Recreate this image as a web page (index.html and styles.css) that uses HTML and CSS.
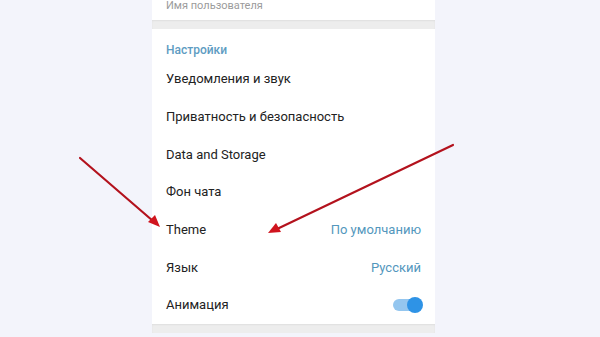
FILE: index.html
```html
<!DOCTYPE html>
<html lang="ru">
<head>
<meta charset="utf-8">
<link rel="stylesheet" href="styles.css">
</head>
<body>
<div class="panel">
  <div class="card card-top">
    <div class="username">Имя пользователя</div>
  </div>
  <div class="band"></div>
  <div class="card settings">
    <div class="header">Настройки</div>
    <div class="row"><span>Уведомления и звук</span></div>
    <div class="row"><span>Приватность и безопасность</span></div>
    <div class="row"><span>Data and Storage</span></div>
    <div class="row"><span>Фон чата</span></div>
    <div class="row"><span>Theme</span><span class="value">По умолчанию</span></div>
    <div class="row"><span>Язык</span><span class="value">Русский</span></div>
    <div class="row"><span>Анимация</span><span class="toggle"><span class="knob"></span></span></div>
  </div>
  <div class="band"></div>
  <div class="card card-bottom"></div>
</div>
<svg class="arrows" width="600" height="337" viewBox="0 0 600 337">
  <line x1="80" y1="158" x2="153" y2="221" stroke="#b3121d" stroke-width="2.2" stroke-linecap="round"/>
  <polygon points="160,227 148,222 155,215" fill="#d0141e"/>
  <line x1="453" y1="145" x2="277" y2="229" stroke="#b3121d" stroke-width="2.2" stroke-linecap="round"/>
  <polygon points="268,233 276,223 281,232" fill="#d0141e"/>
</svg>
</body>
</html>
```
FILE: styles.css
```css
html, body {
  margin: 0;
  padding: 0;
}
body {
  width: 600px;
  height: 337px;
  overflow: hidden;
  background: #f3f4fb;
  font-family: Roboto, "Noto Sans", sans-serif;
  position: relative;
}
.panel {
  margin-left: 152px;
  width: 283px;
  display: flex;
  flex-direction: column;
}
.card {
  background: #ffffff;
}
.card-top {
  height: 20px;
  position: relative;
  overflow: hidden;
}
.username {
  font-size: 11px;
  color: #9b9b9b;
  padding-left: 14px;
  line-height: 12px;
  margin-top: 0;
}
.band {
  height: 9px;
  background: #ededed;
  box-shadow: inset 0 1px 2px rgba(0,0,0,0.06);
}
.settings {
  display: flex;
  flex-direction: column;
}
.header {
  height: 31px;
  box-sizing: border-box;
  padding: 14px 14px 0;
  font-size: 12px;
  font-weight: 500;
  color: #5e9cc2;
  line-height: 14px;
}
.row {
  height: 37.7px;
  display: flex;
  align-items: center;
  justify-content: space-between;
  padding: 0 14px;
  font-size: 13px;
  color: #222222;
}
.value {
  color: #5397bd;
}
.toggle {
  position: relative;
  width: 28px;
  height: 12px;
  border-radius: 6px;
  background: #94c6ef;
}
.knob {
  position: absolute;
  right: -2px;
  top: -2px;
  width: 16px;
  height: 16px;
  border-radius: 50%;
  background: #2e93e6;
}
.card-bottom {
  flex: 1;
  height: 10px;
}
.arrows {
  position: absolute;
  left: 0;
  top: 0;
}
```
